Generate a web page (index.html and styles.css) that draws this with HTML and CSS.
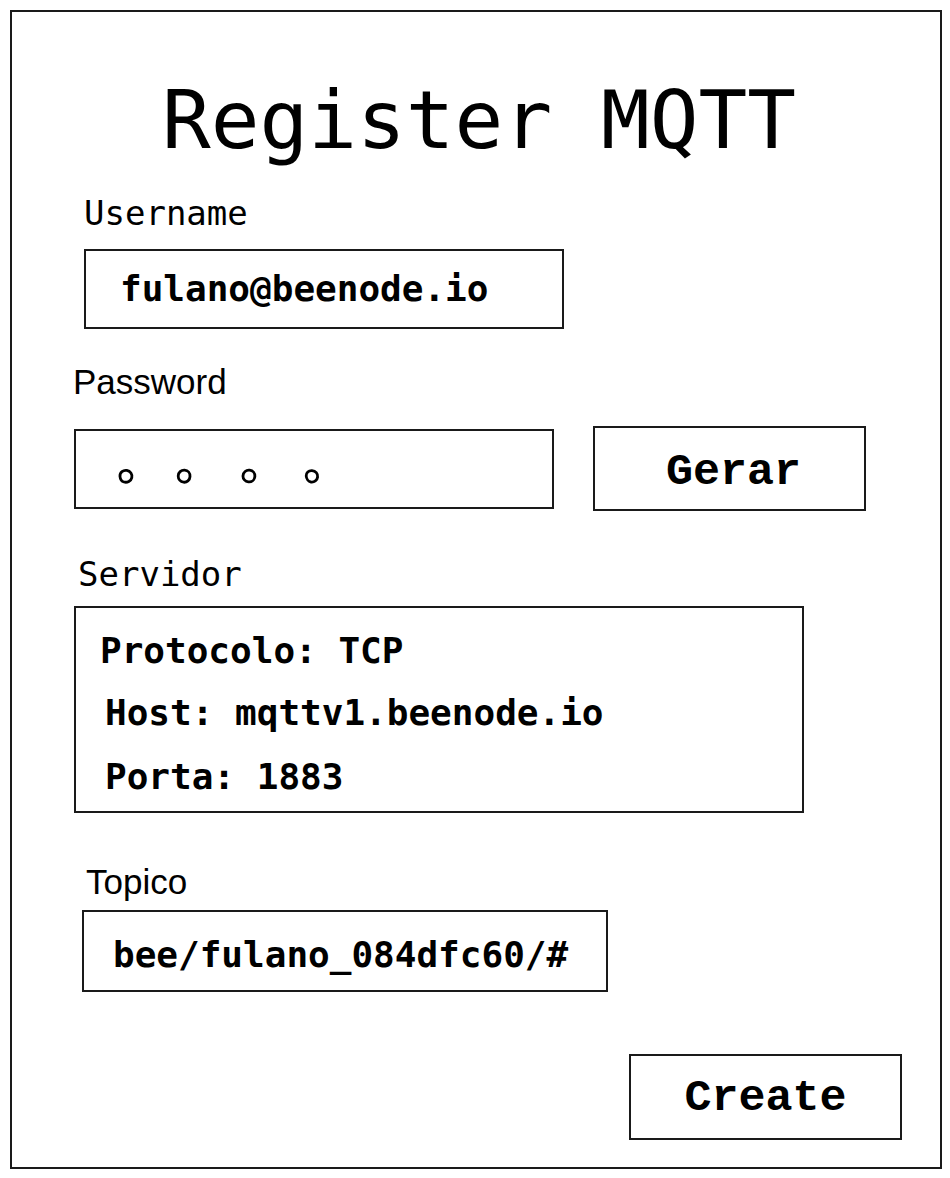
FILE: index.html
```html
<!DOCTYPE html>
<html>
<head>
<meta charset="utf-8">
<link rel="stylesheet" href="styles.css">
</head>
<body>
<div class="frame">
  <h1 class="title">Register MQTT</h1>
  <div class="label mono username-label">Username</div>
  <div class="field username-field"><span class="field-text">fulano@beenode.io</span></div>
  <div class="label sans password-label">Password</div>
  <div class="password-row">
    <div class="field password-field">
      <svg class="dots" width="260" height="76" viewBox="0 0 260 76">
        <path d="M44 45.5 C43.6 41.2 47.3 38.8 50.8 39.4 C54.4 40 56.6 43.2 55.8 46.6 C55 50.2 51.2 51.9 48 51 C45.6 50.4 44.2 48 44 45.5 Z" />
        <path d="M102.2 45 C102.2 41.4 105.2 39 108.6 39.2 C112 39.4 114.2 42.2 114 45.6 C113.8 49.2 110.8 51.6 107.6 51.2 C104.4 50.8 102.2 48.2 102.2 45 Z" />
        <path d="M167 44.8 C167.2 41.2 170.2 38.8 173.6 39.2 C177 39.6 179.2 42.4 178.8 45.8 C178.4 49 175.6 51.2 172.4 50.8 C169.2 50.4 166.8 47.8 167 44.8 Z" />
        <path d="M230.2 45 C230 41.6 232.6 39.4 236 39.6 C239.6 39.8 242 42.6 241.6 46 C241.2 49.4 238.2 51.4 235 51 C232.4 50.6 230.4 47.8 230.2 45 Z" />
      </svg>
    </div>
    <div class="button gerar">Gerar</div>
  </div>
  <div class="label mono servidor-label">Servidor</div>
  <div class="server-box">
    <div class="server-line first">Protocolo: TCP</div>
    <div class="server-line indent second">Host: mqttv1.beenode.io</div>
    <div class="server-line indent third">Porta: 1883</div>
  </div>
  <div class="label sans topico-label">Topico</div>
  <div class="field topico-field"><span class="field-text">bee/fulano_084dfc60/#</span></div>
  <div class="button create">Create</div>
</div>
</body>
</html>
```
FILE: styles.css
```css
html, body {
  margin: 0;
  padding: 0;
  background: #ffffff;
}

body {
  font-family: "DejaVu Sans Mono", monospace;
  color: #000;
}

.frame {
  box-sizing: border-box;
  margin: 10px;
  width: 932px;
  height: 1159px;
  border: 2px solid #1a1a1a;
  display: flex;
  flex-direction: column;
  align-items: flex-start;
}

.title {
  align-self: stretch;
  margin: 68px 0 0 0;
  padding-left: 6px;
  font-family: "DejaVu Sans Mono", monospace;
  font-weight: normal;
  font-size: 81px;
  line-height: 81px;
  height: 81px;
  text-align: center;
}

.label {
  height: 34px;
  line-height: 34px;
  white-space: nowrap;
}

.label.mono {
  font-family: "DejaVu Sans Mono", monospace;
  font-size: 34px;
}

.label.sans {
  font-family: "Liberation Sans", Arial, sans-serif;
  font-size: 35px;
}

.username-label {
  margin-top: 35px;
  margin-left: 72px;
}

.field {
  box-sizing: border-box;
  border: 2px solid #1a1a1a;
  display: flex;
  align-items: center;
}

.field-text {
  font-family: "DejaVu Sans Mono", monospace;
  font-weight: bold;
  font-size: 36px;
  line-height: 40px;
  white-space: nowrap;
}

.username-field {
  margin-top: 19px;
  margin-left: 72px;
  width: 480px;
  height: 80px;
  padding-left: 34px;
}

.password-label {
  margin-top: 36px;
  margin-left: 61px;
}

.password-row {
  margin-top: 27px;
  margin-left: 62px;
  display: flex;
  align-items: center;
  gap: 39px;
  height: 85px;
}

.password-field {
  width: 480px;
  height: 80px;
  align-items: flex-start;
}

.dots {
  display: block;
}

.dots path {
  fill: none;
  stroke: #000;
  stroke-width: 2.8;
}

.button {
  box-sizing: border-box;
  border: 2px solid #1a1a1a;
  display: flex;
  align-items: center;
  justify-content: center;
  font-family: "Liberation Mono", "Courier New", monospace;
  font-weight: bold;
  font-size: 45px;
  width: 273px;
}

.gerar {
  height: 85px;
  padding-left: 8px;
  padding-top: 8px;
}

.servidor-label {
  margin-top: 46px;
  margin-left: 66px;
}

.server-box {
  box-sizing: border-box;
  margin-top: 15px;
  margin-left: 62px;
  width: 730px;
  height: 207px;
  border: 2px solid #1a1a1a;
  padding: 25px 0 0 24px;
}

.server-line {
  font-family: "DejaVu Sans Mono", monospace;
  font-weight: bold;
  font-size: 36px;
  line-height: 36px;
  height: 36px;
  white-space: nowrap;
}

.server-line.indent {
  margin-left: 5px;
}

.server-line.second {
  margin-top: 26px;
}

.server-line.third {
  margin-top: 28px;
}

.topico-label {
  margin-top: 52px;
  margin-left: 74px;
}

.topico-field {
  margin-top: 11px;
  margin-left: 70px;
  width: 526px;
  height: 82px;
  padding-left: 29px;
  padding-top: 8px;
}

.create {
  margin-top: 62px;
  margin-left: 617px;
  height: 86px;
  padding-left: 0;
  padding-top: 2px;
}
```
